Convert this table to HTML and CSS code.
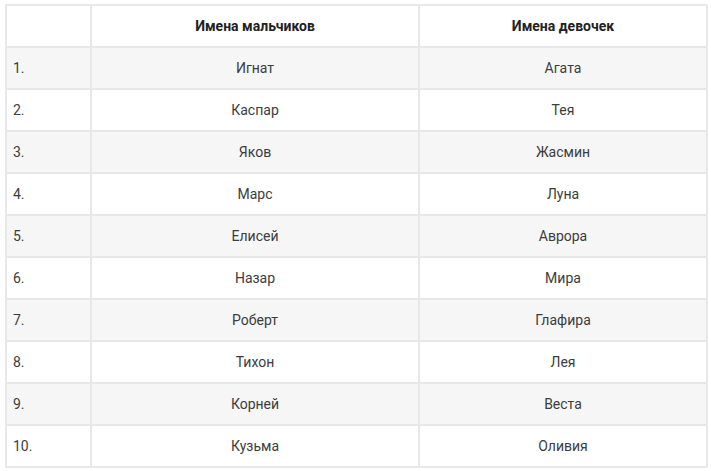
FILE: index.html
```html
<!DOCTYPE html>
<html lang="ru">
<head>
<meta charset="utf-8">
<link rel="stylesheet" href="styles.css">
</head>
<body>
<table class="names">
  <colgroup><col class="c-num"><col class="c-boys"><col class="c-girls"></colgroup>
  <thead>
    <tr><th></th><th>Имена мальчиков</th><th>Имена девочек</th></tr>
  </thead>
  <tbody>
    <tr><td class="num">1.</td><td>Игнат</td><td>Агата</td></tr>
    <tr><td class="num">2.</td><td>Каспар</td><td>Тея</td></tr>
    <tr><td class="num">3.</td><td>Яков</td><td>Жасмин</td></tr>
    <tr><td class="num">4.</td><td>Марс</td><td>Луна</td></tr>
    <tr><td class="num">5.</td><td>Елисей</td><td>Аврора</td></tr>
    <tr><td class="num">6.</td><td>Назар</td><td>Мира</td></tr>
    <tr><td class="num">7.</td><td>Роберт</td><td>Глафира</td></tr>
    <tr><td class="num">8.</td><td>Тихон</td><td>Лея</td></tr>
    <tr><td class="num">9.</td><td>Корней</td><td>Веста</td></tr>
    <tr><td class="num">10.</td><td>Кузьма</td><td>Оливия</td></tr>
  </tbody>
</table>
</body>
</html>
```
FILE: styles.css
```css
html, body { margin: 0; padding: 0; background: #fff; }
body { padding: 4px 5px; font-family: Roboto, "Liberation Sans", sans-serif; font-size: 14px; color: #3c3c3c; }
.names { border-collapse: collapse; width: 701px; table-layout: fixed; }
.c-num { width: 85px; }
.c-boys { width: 328px; }
.c-girls { width: 288px; }
.names th, .names td { border: 2px solid #e8e8e8; height: 42px; padding: 0 6px; text-align: center; vertical-align: middle; box-sizing: border-box; }
.names th { font-weight: bold; color: #222; }
.names td.num { text-align: left; }
.names tbody tr:nth-child(odd) td { background: #f6f6f6; }
```
